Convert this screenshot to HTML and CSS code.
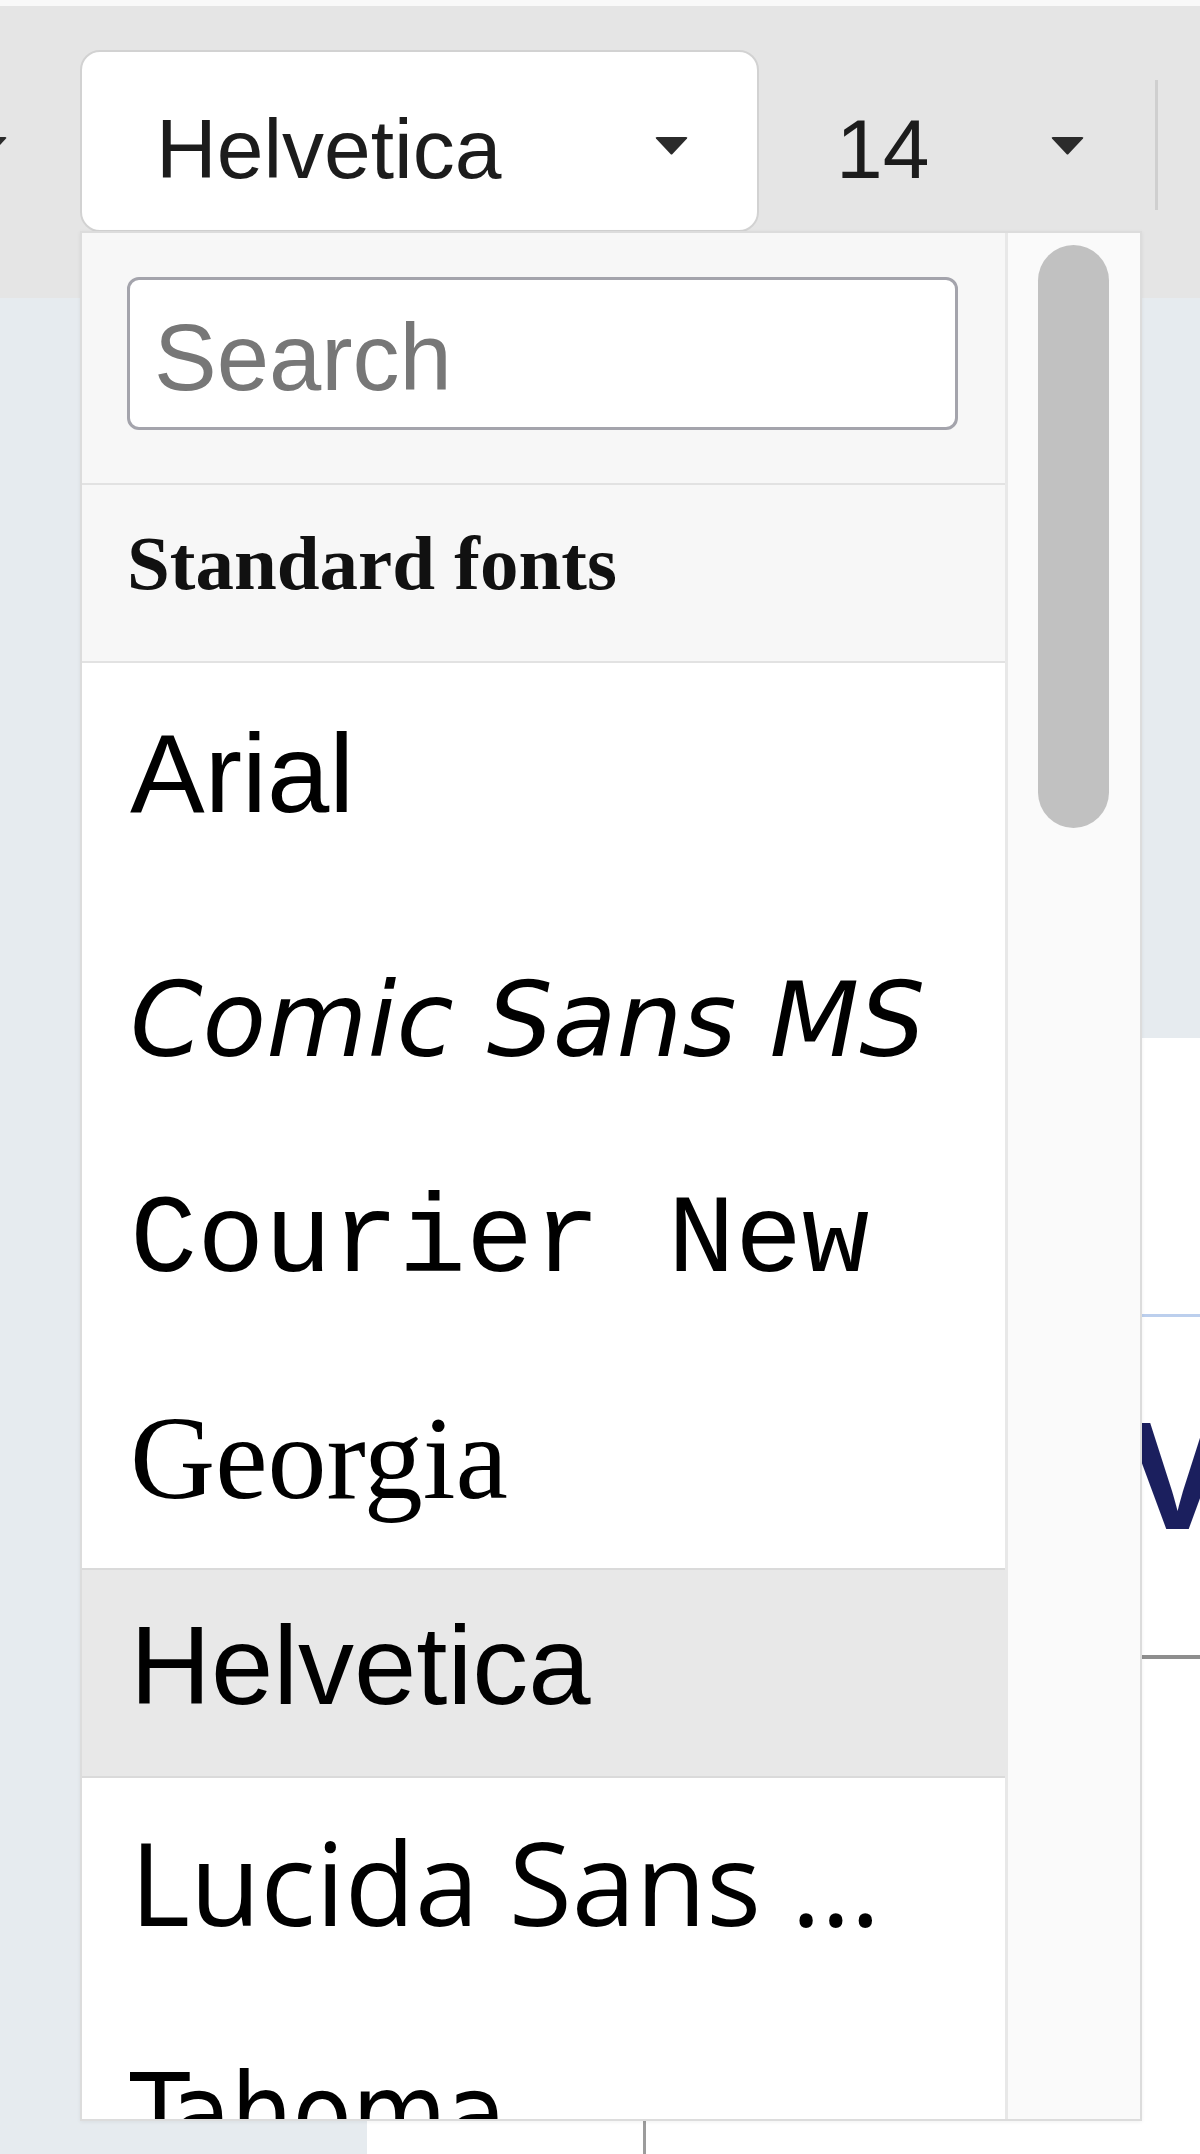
FILE: index.html
```html
<!DOCTYPE html>
<html lang="en">
<head>
<meta charset="utf-8">
<title>Font picker</title>
<link rel="stylesheet" href="styles.css">
</head>
<body>
<div class="app">
  <div class="top-strip"></div>
  <div class="toolbar">
    <svg class="caret caret-partial" viewBox="0 0 33 18" width="33" height="18"><path d="M1 1.5 Q0 0 2 0 H31 Q33 0 32 1.5 L17.5 17 Q16.5 18 15.5 17 Z"/></svg>
    <div class="font-btn">
      <span class="btn-label">Helvetica</span>
      <svg class="caret caret-btn" viewBox="0 0 33 18" width="33" height="18"><path d="M1 1.5 Q0 0 2 0 H31 Q33 0 32 1.5 L17.5 17 Q16.5 18 15.5 17 Z"/></svg>
    </div>
    <div class="size-sel">
      <span class="btn-label">14</span>
      <svg class="caret caret-btn" viewBox="0 0 33 18" width="33" height="18"><path d="M1 1.5 Q0 0 2 0 H31 Q33 0 32 1.5 L17.5 17 Q16.5 18 15.5 17 Z"/></svg>
    </div>
    <div class="tb-divider"></div>
  </div>
  <div class="page">
    <div class="doc">
      <div class="doc-left"></div>
      <div class="doc-right">
        <div class="doc-band"></div>
        <div class="doc-title">V</div>
      </div>
    </div>
  </div>

  <div class="font-menu">
    <div class="menu-main">
      <div class="menu-search">
        <input class="search-input" type="text" placeholder="Search">
      </div>
      <div class="menu-header">Standard fonts</div>
      <div class="menu-list">
        <div class="row row-arial"><span class="row-name">Arial</span></div>
        <div class="row row-comic"><span class="row-name">Comic Sans MS</span></div>
        <div class="row row-courier"><span class="row-name">Courier New</span></div>
        <div class="row row-georgia"><span class="row-name">Georgia</span></div>
        <div class="row row-helvetica is-selected"><span class="row-name">Helvetica</span></div>
        <div class="row row-lucida"><span class="row-name">Lucida Sans Unicode</span></div>
        <div class="row row-tahoma"><span class="row-name">Tahoma</span></div>
      </div>
    </div>
    <div class="menu-scroll">
      <div class="scroll-thumb"></div>
    </div>
  </div>
</div>
</body>
</html>
```

FILE: styles.css
```css
* {
  box-sizing: border-box;
}

html, body {
  margin: 0;
  padding: 0;
}

body {
  width: 1200px;
  height: 2154px;
  overflow: hidden;
  font-family: "Liberation Sans", Arial, sans-serif;
  background: #e6ebef;
}

.app {
  position: relative;
  width: 1200px;
  height: 2154px;
}

.top-strip {
  height: 6px;
  background: #f9f9f9;
}

.toolbar {
  height: 292px;
  background: #e5e5e5;
  display: flex;
  align-items: flex-start;
}

.caret {
  display: block;
  flex: none;
  fill: #2b2b2b;
}

.caret-partial {
  margin-left: -26px;
  margin-top: 131px;
}

.font-btn {
  margin-left: 73px;
  margin-top: 44px;
  width: 679px;
  height: 182px;
  border: 2px solid #d2d2d2;
  border-radius: 20px;
  background: #ffffff;
  display: flex;
  align-items: center;
  justify-content: space-between;
  padding: 16px 69px 0 74px;
}

.size-sel {
  margin-top: 44px;
  width: 396px;
  height: 182px;
  display: flex;
  align-items: center;
  justify-content: space-between;
  padding: 16px 71px 0 77px;
}

.btn-label {
  font-family: "Liberation Sans", Arial, sans-serif;
  font-size: 84px;
  color: #1c1c1c;
}

.caret-btn {
  margin-bottom: 6px;
}

.tb-divider {
  margin-top: 74px;
  width: 3px;
  height: 130px;
  background: #cfcfcf;
}

/* background page */
.page {
  height: 1856px;
  display: flex;
  background: #e6ebef;
}

.doc {
  margin-left: 367px;
  margin-top: 740px;
  flex: 1;
  min-width: 0;
  background: #ffffff;
  display: flex;
}

.doc-left {
  width: 279px;
  border-right: 3px solid #9c9c9c;
}

.doc-right {
  flex: 1;
  min-width: 0;
}

.doc-band {
  height: 279px;
  border-bottom: 3px solid #bccfed;
}

.doc-title {
  height: 342px;
  border-bottom: 4px solid #8e8e8e;
  padding: 82px 0 0 480px;
  font-family: "Liberation Sans", Arial, sans-serif;
  font-weight: 700;
  font-size: 154px;
  line-height: 154px;
  color: #1b1f5e;
  white-space: nowrap;
}

/* font dropdown menu */
.font-menu {
  position: absolute;
  left: 80px;
  top: 231px;
  width: 1062px;
  height: 1890px;
  border: 2px solid #dcdcdc;
  background: #ffffff;
  display: flex;
  overflow: hidden;
  z-index: 2;
  box-shadow: 0 1px 4px rgba(0, 0, 0, 0.06);
}

.menu-main {
  flex: 1;
  min-width: 0;
  display: flex;
  flex-direction: column;
  border-right: 3px solid #e8e8e8;
  overflow: hidden;
}

.menu-search {
  flex: none;
  height: 252px;
  background: #f7f7f7;
  border-bottom: 2px solid #e2e2e2;
  padding: 44px 47px 0 45px;
}

.search-input {
  display: block;
  width: 100%;
  height: 153px;
  margin: 0;
  border: 3px solid #a4a4ac;
  border-radius: 12px;
  background: #ffffff;
  padding: 9px 20px 0 24px;
  font-family: "Liberation Sans", Arial, sans-serif;
  font-size: 94px;
  color: #333333;
  outline: none;
}

.search-input::placeholder {
  color: #777777;
}

.menu-header {
  flex: none;
  height: 178px;
  background: #f7f7f7;
  border-bottom: 2px solid #e2e2e2;
  padding: 40px 0 0 45px;
  font-family: "Liberation Serif", "Times New Roman", serif;
  font-weight: 700;
  font-size: 77px;
  line-height: 77px;
  color: #111111;
}

.menu-list {
  flex: none;
}

.row {
  background: #ffffff;
  padding-left: 48px;
  padding-right: 70px;
  color: #000000;
}

.row-name {
  display: block;
  white-space: nowrap;
  overflow: hidden;
  text-overflow: ellipsis;
  line-height: 1.4;
}

.row-arial {
  height: 222px;
  padding-top: 33px;
  font-family: "Liberation Sans", Arial, sans-serif;
  font-size: 112px;
}

.row-comic {
  height: 220px;
  padding-top: 63px;
  font-family: "Comic Sans MS", "DejaVu Sans", sans-serif;
  font-style: oblique;
  font-size: 104px;
}

.row-courier {
  height: 230px;
  padding-top: 59px;
  font-family: "Liberation Mono", "Courier New", monospace;
  font-size: 112px;
}

.row-georgia {
  height: 233px;
  padding-top: 41px;
  font-family: Georgia, "Liberation Serif", serif;
  font-size: 118px;
}

.row-helvetica {
  height: 210px;
  padding-top: 18px;
  font-family: "Liberation Sans", Arial, sans-serif;
  font-size: 112px;
}

.row.is-selected {
  background: #e8e8e8;
  border-top: 2px solid #dadada;
  border-bottom: 2px solid #dadada;
}

.row-lucida {
  height: 222px;
  padding-top: 23px;
  padding-right: 60px;
  font-family: "Open Sans", sans-serif;
  font-size: 115px;
}

.row-tahoma {
  height: 222px;
  padding-top: 38px;
  font-family: "DejaVu Sans", sans-serif;
  font-stretch: condensed;
  font-size: 108px;
}

.menu-scroll {
  flex: none;
  width: 132px;
  background: #fafafa;
  padding: 12px 0 0 30px;
}

.scroll-thumb {
  width: 71px;
  height: 583px;
  border-radius: 36px;
  background: #c1c1c1;
}
```
